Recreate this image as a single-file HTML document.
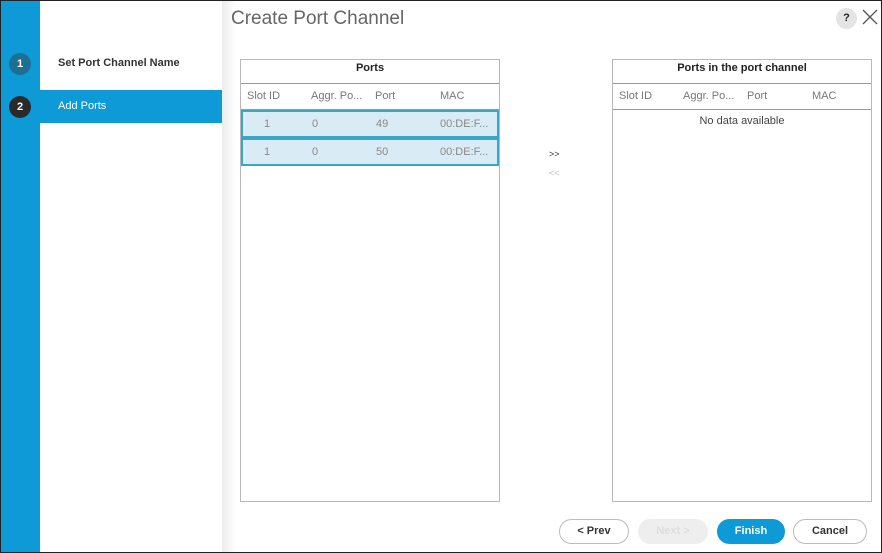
<!DOCTYPE html><html><head><style>
*{margin:0;padding:0;box-sizing:border-box}
body{width:882px;height:553px;position:relative;overflow:hidden;font-family:"Liberation Sans",sans-serif;background:#fff}
.abs{position:absolute}
.frame{left:0;top:0;width:882px;height:553px;border:1px solid #222;z-index:10;pointer-events:none}
.strip{left:0;top:0;width:40px;height:553px;background:#0d9ad6}
.side{left:40px;top:0;width:182px;height:553px;background:#fff}
.shadow{left:222px;top:0;width:14px;height:553px;background:linear-gradient(90deg,#ececec,#fff)}
.circ{width:22px;height:22px;border-radius:50%;color:#fff;font-size:11px;font-weight:bold;text-align:center;line-height:22px;left:9px}
.tbl{border:1px solid #b8b8b8;background:#fff}
.th{font-size:11px;font-weight:bold;color:#222;text-align:center;height:24px;line-height:14px;border-bottom:1px solid #999}
.ch{height:26px;border-bottom:1px solid #999;font-size:11px;color:#777;position:relative}
.ch span,.row span{position:absolute;top:6px}
.row{height:28px;background:#d9ecf6;border:2px solid #3aa6c9;font-size:11px;color:#888;position:relative}
.btn{top:519px;height:25px;border-radius:13px;font-size:11px;font-weight:bold;text-align:center;line-height:23px;border:1px solid #bbb;color:#333;background:#fff}
</style></head><body>
<div class="abs strip"></div>
<div class="abs side"></div>
<div class="abs shadow"></div>
<div class="abs circ" style="top:53px;background:#1d6f93">1</div>
<div class="abs" style="left:58px;top:57px;font-size:11px;font-weight:bold;color:#333">Set Port Channel Name</div>
<div class="abs" style="left:40px;top:90px;width:182px;height:33px;background:#0d9ad6"></div>
<div class="abs circ" style="top:96px;background:#2a2a2a">2</div>
<div class="abs" style="left:58px;top:100px;font-size:11px;color:#fff">Add Ports</div>
<div class="abs" style="left:231px;top:8px;font-size:19px;color:#666">Create Port Channel</div>
<div class="abs" style="left:836px;top:8px;width:21px;height:21px;border-radius:50%;background:#e4e4e4;font-size:11px;font-weight:bold;text-align:center;line-height:21px;color:#222">?</div>
<svg class="abs" style="left:862px;top:9px" width="16" height="16"><path d="M1 1L15 15M15 1L1 15" stroke="#555" stroke-width="1.3"/></svg>

<div class="abs tbl" style="left:240px;top:59px;width:260px;height:443px">
<div class="th" style="padding-top:1px">Ports</div>
<div class="ch"><span style="left:6px">Slot ID</span><span style="left:70px">Aggr. Po...</span><span style="left:134px">Port</span><span style="left:199px">MAC</span></div>
<div class="row"><span style="left:21px">1</span><span style="left:69px">0</span><span style="left:133px">49</span><span style="left:197px">00:DE:F...</span></div>
<div class="row"><span style="left:21px">1</span><span style="left:69px">0</span><span style="left:133px">50</span><span style="left:197px">00:DE:F...</span></div>
</div>
<div class="abs" style="left:549px;top:149px;font-size:9px;color:#333">&gt;&gt;</div>
<div class="abs" style="left:549px;top:168px;font-size:9px;color:#bbb">&lt;&lt;</div>
<div class="abs tbl" style="left:612px;top:59px;width:260px;height:443px">
<div class="th" style="padding-top:1px">Ports in the port channel</div>
<div class="ch"><span style="left:6px">Slot ID</span><span style="left:70px">Aggr. Po...</span><span style="left:134px">Port</span><span style="left:199px">MAC</span></div>
<div style="text-align:center;font-size:11px;color:#444;padding-top:5px">No data available</div>
</div>
<div class="abs btn" style="left:559px;width:70px">&lt; Prev</div>
<div class="abs btn" style="left:638px;width:70px;background:#eee;border-color:#eee;color:#ddd">Next &gt;</div>
<div class="abs btn" style="left:717px;width:68px;background:#0d9ad6;border-color:#0d9ad6;color:#fff">Finish</div>
<div class="abs btn" style="left:793px;width:74px">Cancel</div>
<div class="abs frame"></div>
</body></html>
